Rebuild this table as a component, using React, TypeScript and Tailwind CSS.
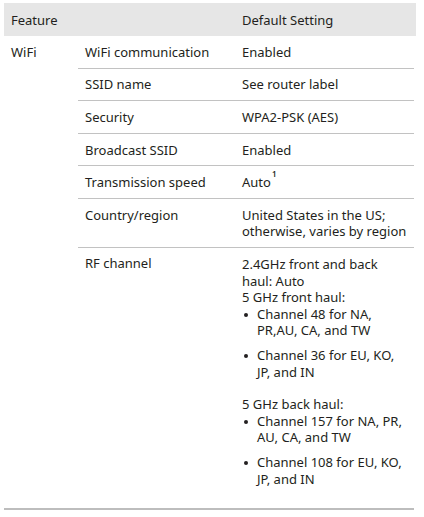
import React from "react";

const Row = ({ a, children, last }: { a: string; children: React.ReactNode; last?: boolean }) => (
  <div className={"flex " + (last ? "" : "border-b border-[#c2c2c2]")}>
    <div className="w-[157px] shrink-0 pl-[7px] py-[7.8px]">{a}</div>
    <div className="flex-1 pl-[7px] pr-[4px] py-[7.8px]">{children}</div>
  </div>
);

const Bullet = ({ children, first }: { children: React.ReactNode; first?: boolean }) => (
  <div className={"flex " + (first ? "" : "mt-[9px]")}>
    <span className="w-[15px] shrink-0 flex items-start pt-[7px] pl-[2px]">
      <span className="w-[4px] h-[4px] rounded-full bg-[#231f20]" />
    </span>
    <span>{children}</span>
  </div>
);

export default function App() {
  return (
    <div
      className="bg-white w-[424px] h-[517px] pt-[3px] pl-[4px] text-[13px] leading-[16px] text-[#231f20]"
      style={{ fontFamily: '"Noto Sans", sans-serif' }}
    >
      <div className="w-[412px] flex bg-[#e6e6e6] h-[33px] items-center">
        <div className="w-[231px] pl-[7px]">Feature</div>
        <div className="pl-[7px]">Default Setting</div>
      </div>
      <div className="w-[410px] flex border-b-2 border-[#bdbdbd]">
        <div className="w-[74px] shrink-0 pl-[7px] py-[8px]">WiFi</div>
        <div className="flex-1">
          <Row a="WiFi communication">Enabled</Row>
          <Row a="SSID name">See router label</Row>
          <Row a="Security">WPA2-PSK (AES)</Row>
          <Row a="Broadcast SSID">Enabled</Row>
          <Row a="Transmission speed">
            <span className="relative">
              Auto
              <span className="absolute left-full ml-[1px] -top-[3px] text-[8px] leading-none font-semibold">1</span>
            </span>
          </Row>
          <Row a="Country/region">
            <div>United States in the US;</div>
            <div>otherwise, varies by region</div>
          </Row>
          <Row a="RF channel" last>
            <div className="leading-[16.4px] pt-[1px] pb-[13px]">
              <div>2.4GHz front and back</div>
              <div>haul: Auto</div>
              <div>5 GHz front haul:</div>
              <Bullet first>
                Channel 48 for NA,
                <br />
                PR,AU, CA, and TW
              </Bullet>
              <Bullet>
                Channel 36 for EU, KO,
                <br />
                JP, and IN
              </Bullet>
              <div className="mt-[16px]">5 GHz back haul:</div>
              <Bullet first>
                Channel 157 for NA, PR,
                <br />
                AU, CA, and TW
              </Bullet>
              <Bullet>
                Channel 108 for EU, KO,
                <br />
                JP, and IN
              </Bullet>
            </div>
          </Row>
        </div>
      </div>
    </div>
  );
}
